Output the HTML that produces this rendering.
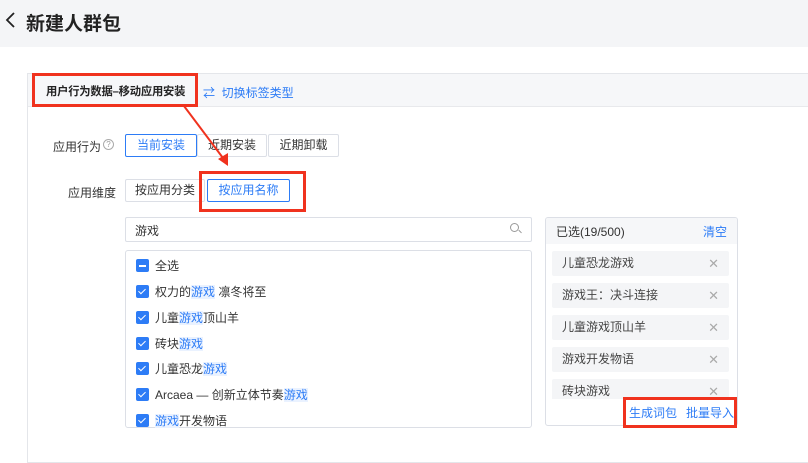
<!DOCTYPE html>
<html><head><meta charset="utf-8"><style>
*{box-sizing:border-box;margin:0;padding:0}
body{width:808px;height:448px;overflow:hidden;background:#fff;font-family:"Liberation Sans","Noto Sans CJK SC",sans-serif;color:#333;font-size:12px;position:relative}
.a{position:absolute}
.top{left:0;top:0;width:808px;height:47px;background:#f4f5f7}
.btn{position:absolute;height:23px;border:1px solid #dcdfe6;background:#fff;text-align:center;line-height:21px;font-size:12px;color:#333;border-radius:2px}
.blue{color:#2d7cf6}
.bb{border-color:#2d7cf6;color:#2d7cf6}
.red{position:absolute;border:3px solid #f0321e}
.cb{position:absolute;left:136px;width:13px;height:13px;background:#2d7cf6;border-radius:2px}
.cb:after{content:"";position:absolute;left:4px;top:1.5px;width:3px;height:6px;border:solid #fff;border-width:0 1.6px 1.6px 0;transform:rotate(45deg)}
.it{position:absolute;left:155px;font-size:12px;color:#333;line-height:16px}
.hl{color:#2d7cf6;background:#eaf2ff}
.sel{position:absolute;left:552px;width:177px;height:25px;background:#f4f5f7;border-radius:2px;line-height:25px;padding-left:10px;font-size:12px;color:#444}
.sel span{position:absolute right:10px;color:#aaa;font-size:13px}
.sel span{position:absolute;right:10px}
</style></head><body>
<div class="a top"></div>
<svg class="a" style="left:3px;top:11px" width="14" height="18"><polyline points="11,2 4,9 11,16" fill="none" stroke="#222" stroke-width="1.8"/></svg>
<div class="a" style="left:26px;top:9px;font-size:19px;font-weight:bold;color:#222">新建人群包</div>
<div class="a" style="left:27px;top:73px;width:790px;height:390px;border:1px solid #e4e6ea"></div>
<div class="a" style="left:28px;top:74px;width:790px;height:33px;background:#f6f7f9;border-bottom:1px solid #e8e9ec"></div>
<div class="a" style="left:46px;top:83px;font-weight:bold;font-size:11.3px;color:#222;letter-spacing:-0.2px">用户行为数据–移动应用安装</div>
<div class="red" style="left:32px;top:73px;width:166px;height:34px"></div>
<div class="a blue" style="left:203px;top:84px;font-size:12px">⇄&nbsp; 切换标签类型</div>

<div class="a" style="left:53px;top:138px">应用行为</div>
<div class="a" style="left:103px;top:139px;width:11px;height:11px;border:1px solid #aaa;border-radius:50%;font-size:8px;text-align:center;line-height:9px;color:#999">?</div>
<div class="btn bb" style="left:125px;top:134px;width:72px">当前安装</div>
<div class="btn" style="left:197px;top:134px;width:70px">近期安装</div>
<div class="btn" style="left:268px;top:134px;width:71px">近期卸载</div>

<div class="a" style="left:68px;top:184px">应用维度</div>
<div class="btn" style="left:125px;top:179px;width:80px">按应用分类</div>
<div class="btn bb" style="left:207px;top:179px;width:83px">按应用名称</div>
<div class="red" style="left:199px;top:171px;width:107px;height:41px"></div>

<svg class="a" style="left:0;top:0" width="808" height="448"><line x1="184" y1="106" x2="223" y2="158" stroke="#f0321e" stroke-width="2"/><polygon points="218,159 228,166 228,153" fill="#f0321e"/></svg>

<div class="a" style="left:125px;top:217px;width:407px;height:25px;border:1px solid #dcdfe6;border-radius:2px"></div>
<div class="a" style="left:135px;top:222px">游戏</div>
<div class="a" style="left:510px;top:223px;width:9px;height:9px;border:1.3px solid #999;border-radius:50%"></div>
<div class="a" style="left:518px;top:231px;width:4px;height:1.3px;background:#999;transform:rotate(45deg)"></div>

<div class="a" style="left:125px;top:250px;width:407px;height:178px;border:1px solid #dcdfe6;border-radius:3px"></div>
<div class="a" style="left:136px;top:259px;width:13px;height:13px;background:#2d7cf6;border-radius:2px"><div style="position:absolute;left:3px;top:5.5px;width:7px;height:2px;background:#fff"></div></div>
<div class="it" style="top:258px">全选</div>
<div class="cb" style="top:285px"></div><div class="it" style="top:284px">权力的<span class="hl">游戏</span> 凛冬将至</div>
<div class="cb" style="top:311px"></div><div class="it" style="top:310px">儿童<span class="hl">游戏</span>顶山羊</div>
<div class="cb" style="top:337px"></div><div class="it" style="top:336px">砖块<span class="hl">游戏</span></div>
<div class="cb" style="top:362px"></div><div class="it" style="top:361px">儿童恐龙<span class="hl">游戏</span></div>
<div class="cb" style="top:388px"></div><div class="it" style="top:387px">Arcaea — 创新立体节奏<span class="hl">游戏</span></div>
<div class="cb" style="top:414px"></div><div class="it" style="top:413px"><span class="hl">游戏</span>开发物语</div>

<div class="a" style="left:545px;top:217px;width:193px;height:209px;border:1px solid #dcdfe6;border-radius:3px;overflow:hidden"><div style="height:26px;background:#f6f7f9"></div></div>
<div class="a" style="left:556px;top:223px;font-size:12px;color:#333">已选(19/500)</div>
<div class="a blue" style="left:703px;top:223px">清空</div>
<div class="sel" style="top:251px">儿童恐龙游戏<span>✕</span></div>
<div class="sel" style="top:283px">游戏王：决斗连接<span>✕</span></div>
<div class="sel" style="top:315px">儿童游戏顶山羊<span>✕</span></div>
<div class="sel" style="top:347px">游戏开发物语<span>✕</span></div>
<div class="a" style="left:552px;top:379px;width:177px;height:20px;overflow:hidden"><div class="sel" style="left:0;top:0">砖块游戏<span>✕</span></div></div>
<div class="a" style="left:626px;top:404px;width:110px;height:22px;background:#fff"></div>
<div class="a blue" style="left:629px;top:404px">生成词包</div>
<div class="a blue" style="left:686px;top:404px">批量导入</div>
<div class="red" style="left:623px;top:397px;width:114px;height:31px"></div>
</body></html>
